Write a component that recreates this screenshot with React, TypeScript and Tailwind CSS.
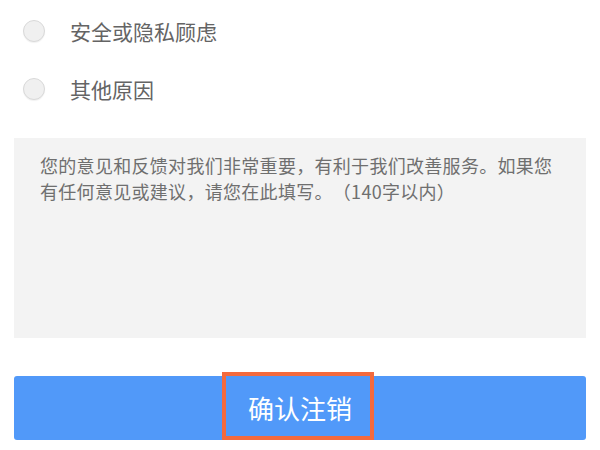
const font = "font-['Noto_Sans_CJK_SC','Noto_Sans',sans-serif]";

function Radio({ label }: { label: string }) {
  return (
    <div className="flex h-[58px] items-center">
      <span className="ml-[23px] h-[22px] w-[22px] rounded-full border border-[#d9d9d9] bg-[#f0f0f0] shadow-[0_1px_1px_rgba(0,0,0,0.06)]" />
      <span className="ml-[25px] text-[21px] leading-none text-[#646464]">
        {label}
      </span>
    </div>
  );
}

export default function App() {
  return (
    <div className={`h-[450px] w-[600px] overflow-hidden bg-white ${font}`}>
      <div className="pt-[2px]">
        <Radio label="安全或隐私顾虑" />
        <Radio label="其他原因" />
      </div>
      <div className="mx-[14px] mt-[20px] h-[200px] bg-[#f3f3f3] px-[26px] pt-[14px] text-[18px] leading-[26px] tracking-[0.3px] text-[#6f6f6f] [text-spacing-trim:space-all]">
        您的意见和反馈对我们非常重要，有利于我们改善服务。如果您有任何意见或建议，请您在此填写。（140字以内）
      </div>
      <div className="relative mx-[14px] mt-[38px] flex h-[64px] items-center justify-center rounded-[3px] bg-[#5199f9]">
        <span className="text-[26px] leading-none text-white">确认注销</span>
        <div className="absolute left-[208px] top-[-4px] h-[68px] w-[152px] border-[4px] border-[#f46a3d]" />
      </div>
    </div>
  );
}
